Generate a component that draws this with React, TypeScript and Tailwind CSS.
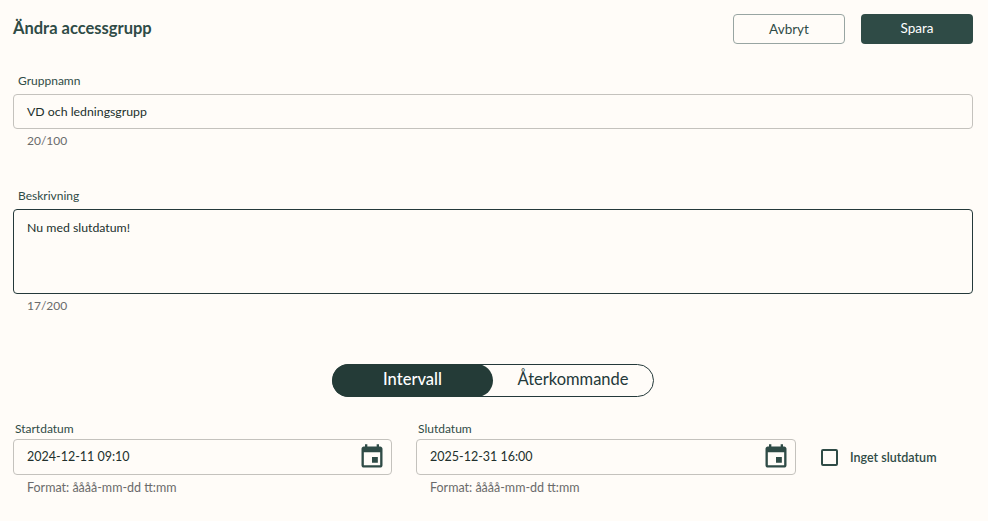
function CalendarIcon() {
  return (
    <svg width="28" height="28" viewBox="0 0 24 24" fill="#2f4b46" className="shrink-0">
      <path d="M17 12h-5v5h5v-5zM16 1v2H8V1H6v2H5c-1.11 0-1.99.9-1.99 2L3 19c0 1.1.89 2 2 2h14c1.1 0 2-.9 2-2V5c0-1.1-.9-2-2-2h-1V1h-2zm3 18H5V8h14v11z" />
    </svg>
  );
}

function DateField({ label, value, className }: { label: string; value: string; className: string }) {
  return (
    <div className={className}>
      <div className="pl-[2px] text-[12px] leading-[16px] text-[#2f4b46]">{label}</div>
      <div className="mt-[2px] flex h-[36px] items-center justify-between rounded-[4px] border border-[#c4c2bd] pl-[13px] pr-[5px] text-[12.5px] text-[#22302d]">
        <span className="pt-[1px]">{value}</span>
        <CalendarIcon />
      </div>
      <div className="mt-[4px] pl-[14px] text-[12.5px] leading-[18px] text-[#6b6b6b]">Format: åååå-mm-dd tt:mm</div>
    </div>
  );
}

export default function App() {
  return (
    <div className="h-[521px] w-[988px] overflow-hidden bg-[#fffcf8] pl-[13px] pr-[15px] pt-[14px] font-['Lato','Noto_Sans',sans-serif]">
      <div className="flex h-[30px] items-center justify-between">
        <h1 className="-mt-[1px] text-[16.5px] font-bold text-[#2f4b46]">Ändra accessgrupp</h1>
        <div className="flex gap-[16px]">
          <button className="h-[30px] w-[112px] rounded-[4px] border border-[#98a5a2] text-[13.5px] text-[#2f4b46]">Avbryt</button>
          <button className="h-[30px] w-[112px] rounded-[4px] bg-[#2f4b46] pb-[2px] text-[13.5px] text-white">Spara</button>
        </div>
      </div>

      <div className="mt-[29px] pl-[5px] text-[12px] leading-[16px] text-[#2f4b46]">Gruppnamn</div>
      <div className="mt-[5px] flex h-[35px] items-center rounded-[4px] border border-[#c4c2bd] pl-[13px] pt-[1px] text-[12.3px] text-[#22302d]">VD och ledningsgrupp</div>
      <div className="mt-[4px] pl-[14px] text-[12px] leading-[16px] text-[#6b6b6b]">20/100</div>

      <div className="mt-[39px] pl-[5px] text-[12px] leading-[16px] text-[#2f4b46]">Beskrivning</div>
      <div className="mt-[5px] h-[85px] rounded-[4px] border border-[#24393a] pl-[13px] pt-[10px] text-[12.3px] leading-[16px] text-[#22302d]">Nu med slutdatum!</div>
      <div className="mt-[4px] pl-[14px] text-[12px] leading-[16px] text-[#6b6b6b]">17/200</div>

      <div className="mt-[50px] flex justify-center">
        <div className="flex h-[33px] w-[322px] rounded-full border border-[#24393a]">
          <div className="-my-px -ml-px flex h-[33px] w-[161px] items-center justify-center rounded-full bg-[#243b37] pb-[2px] text-[16.5px] font-medium text-white">Intervall</div>
          <div className="flex flex-1 items-center justify-center pb-[2px] text-[16.5px] text-[#24393a]">Återkommande</div>
        </div>
      </div>

      <div className="mt-[24px] flex">
        <DateField label="Startdatum" value="2024-12-11 09:10" className="w-[379px]" />
        <DateField label="Slutdatum" value="2025-12-31 16:00" className="ml-[24px] w-[380px]" />
        <div className="ml-[25px] mt-[18px] flex h-[36px] items-center">
          <div className="h-[17px] w-[17px] rounded-[2px] border-2 border-[#2f4b46]" />
          <span className="ml-[12px] pt-[2px] text-[12.5px] font-semibold text-[#2f4b46]">Inget slutdatum</span>
        </div>
      </div>
    </div>
  );
}
